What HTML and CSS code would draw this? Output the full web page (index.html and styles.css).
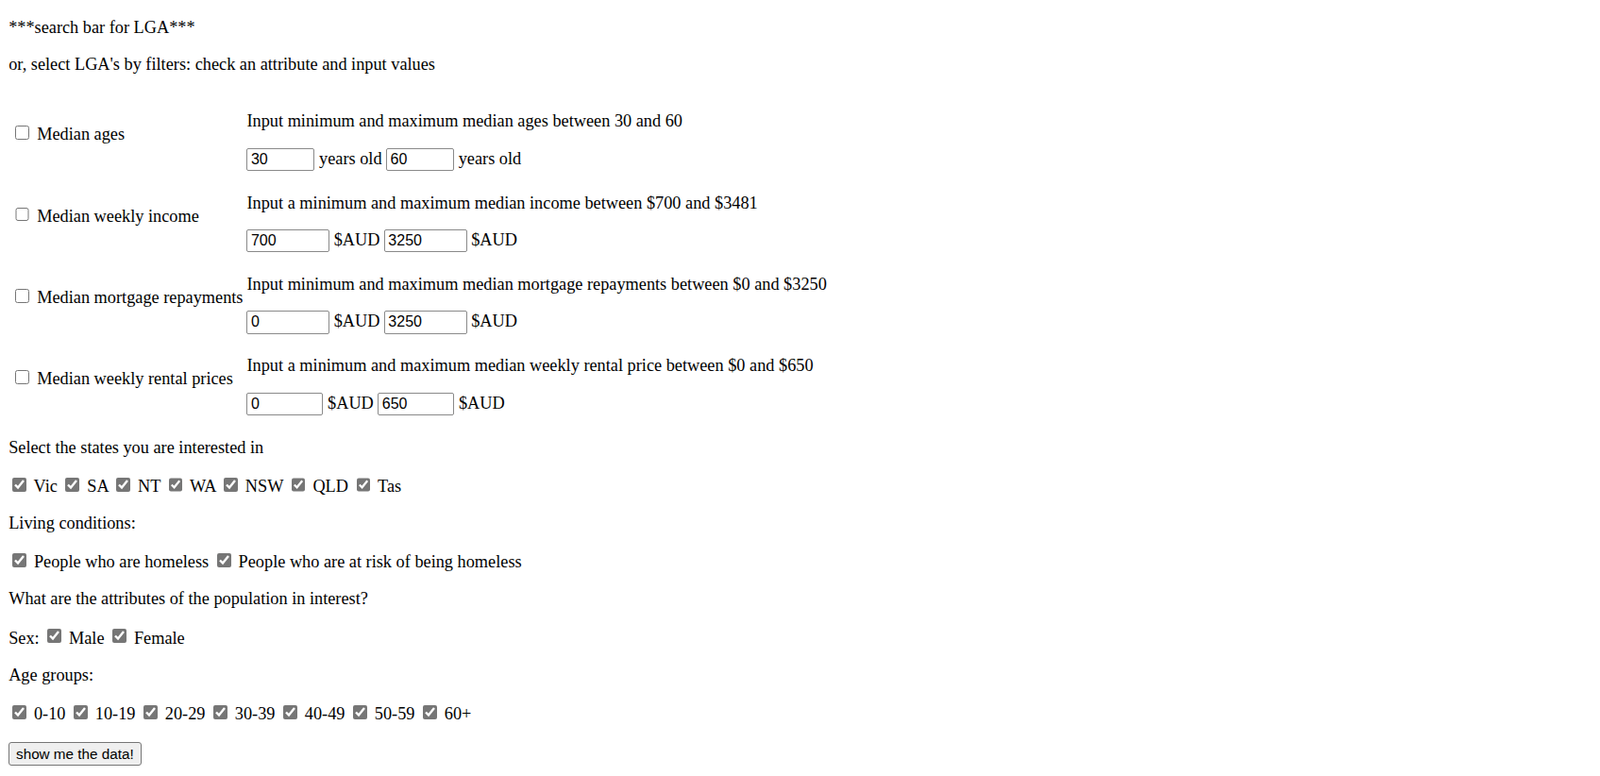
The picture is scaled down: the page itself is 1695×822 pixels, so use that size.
FILE: index.html
```html
<!DOCTYPE html>
<html lang="en">
<head>
<meta charset="utf-8">
<title>LGA filters</title>
<link rel="stylesheet" href="styles.css">
</head>
<body>
<p class="first">***search bar for LGA***</p>
<p>or, select LGA's by filters: check an attribute and input values</p>

<div class="filters">
  <label class="filter-label"><input type="checkbox" class="cb"> Median ages</label>
  <div class="filter-body">
    <div class="desc">Input minimum and maximum median ages between 30 and 60</div>
    <div class="range"><input type="text" class="num w-age" value="30"> years old <input type="text" class="num w-age" value="60"> years old</div>
  </div>

  <label class="filter-label"><input type="checkbox" class="cb"> Median weekly income</label>
  <div class="filter-body">
    <div class="desc">Input a minimum and maximum median income between $700 and $3481</div>
    <div class="range"><input type="text" class="num w-4" value="700"> $AUD <input type="text" class="num w-4" value="3250"> $AUD</div>
  </div>

  <label class="filter-label"><input type="checkbox" class="cb"> Median mortgage repayments</label>
  <div class="filter-body">
    <div class="desc">Input minimum and maximum median mortgage repayments between $0 and $3250</div>
    <div class="range"><input type="text" class="num w-4" value="0"> $AUD <input type="text" class="num w-4" value="3250"> $AUD</div>
  </div>

  <label class="filter-label"><input type="checkbox" class="cb"> Median weekly rental prices</label>
  <div class="filter-body">
    <div class="desc">Input a minimum and maximum median weekly rental price between $0 and $650</div>
    <div class="range"><input type="text" class="num w-3" value="0"> $AUD <input type="text" class="num w-3" value="650"> $AUD</div>
  </div>
</div>

<p>Select the states you are interested in</p>
<p><input type="checkbox" class="cb" checked> <label>Vic</label> <input type="checkbox" class="cb" checked> <label>SA</label> <input type="checkbox" class="cb" checked> <label>NT</label> <input type="checkbox" class="cb" checked> <label>WA</label> <input type="checkbox" class="cb" checked> <label>NSW</label> <input type="checkbox" class="cb" checked> <label>QLD</label> <input type="checkbox" class="cb" checked> <label>Tas</label></p>
<p>Living conditions:</p>
<p><input type="checkbox" class="cb" checked> <label>People who are homeless</label> <input type="checkbox" class="cb" checked> <label>People who are at risk of being homeless</label></p>
<p>What are the attributes of the population in interest?</p>
<p>Sex: <input type="checkbox" class="cb" checked> <label>Male</label> <input type="checkbox" class="cb" checked> <label>Female</label></p>
<p>Age groups:</p>
<p><input type="checkbox" class="cb" checked> <label>0-10</label> <input type="checkbox" class="cb" checked> <label>10-19</label> <input type="checkbox" class="cb" checked> <label>20-29</label> <input type="checkbox" class="cb" checked> <label>30-39</label> <input type="checkbox" class="cb" checked> <label>40-49</label> <input type="checkbox" class="cb" checked> <label>50-59</label> <input type="checkbox" class="cb" checked> <label>60+</label></p>
<button type="button" class="btn">show me the data!</button>
</body>
</html>
```
FILE: styles.css
```css
html {
  background: #fff;
}

body {
  margin: 0;
  padding: 9.15px;
  font-family: "Liberation Serif", "Times New Roman", serif;
  font-size: 18.3px;
  color: #000;
}

p {
  margin: 18.3px 0;
}

p.first {
  margin-top: 9.7px;
}

.filters {
  display: grid;
  grid-template-columns: auto 1fr;
  column-gap: 4px;
  row-gap: 23.6px;
  padding-top: 20.85px;
  padding-bottom: 5.4px;
}

.filter-label {
  align-self: start;
  padding-top: 12.1px;
  padding-left: 3.3px;
  white-space: nowrap;
}

.filter-body {
  display: flex;
  flex-direction: column;
}

.range {
  margin-top: 17.35px;
}

.cb {
  width: 14.8px;
  height: 14.8px;
  margin: 2.9px 3.4px 0 4px;
  vertical-align: baseline;
  accent-color: #767676;
}

.num {
  box-sizing: border-box;
  height: 24.4px;
  padding: 1.1px 3.4px;
  border: 1.1px solid #8a8a8a;
  border-radius: 2px;
  font-family: "Liberation Sans", Arial, sans-serif;
  font-size: 16px;
  color: #000;
  background: #fff;
}

.w-age {
  width: 72px;
}

.w-4 {
  width: 87.6px;
}

.w-3 {
  width: 81px;
}

.btn {
  box-sizing: border-box;
  height: 24.4px;
  margin-top: 1.5px;
  padding: 1.1px 6.9px;
  border: 1.1px solid #767676;
  border-radius: 3px;
  background: #efefef;
  font-family: "Liberation Sans", Arial, sans-serif;
  font-size: 15.25px;
  color: #000;
}
```
